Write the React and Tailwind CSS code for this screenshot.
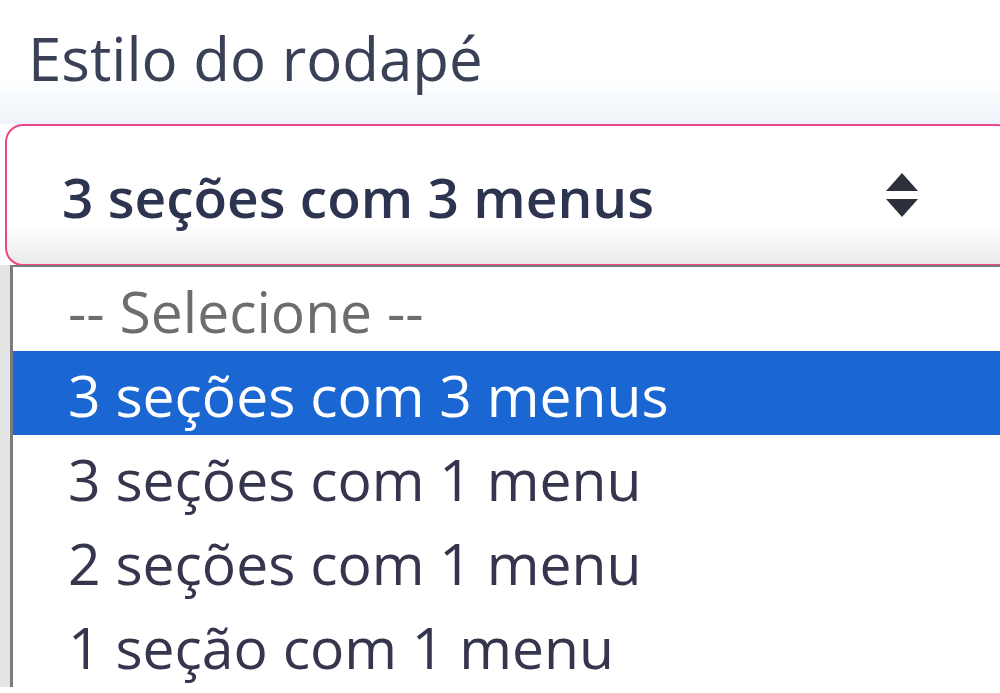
import React from 'react';

const options = [
  { label: '-- Selecione --', muted: true },
  { label: '3 seções com 3 menus', active: true },
  { label: '3 seções com 1 menu' },
  { label: '2 seções com 1 menu' },
  { label: '1 seção com 1 menu' },
];

function Arrows() {
  return (
    <svg width="36" height="48" viewBox="0 0 36 48">
      <path d="M18 2 L34 20 L2 20 Z" fill="#2b303b" />
      <path d="M2 28 L34 28 L18 46 Z" fill="#2b303b" />
    </svg>
  );
}

export default function App() {
  return (
    <div className="w-[1000px] h-[693px] overflow-hidden bg-white font-['Open_Sans',sans-serif]">
      <div className="bg-gradient-to-b from-white from-60% to-[#edf3f9] pl-[28px] pt-[18px] pb-[24px] h-[124px]">
        <span className="text-[60px] leading-[80px] text-[#3a4157]">Estilo do rodapé</span>
      </div>

      <div className="ml-[5px] w-[1010px] h-[142px] border-2 border-[#ea4689] rounded-[18px] bg-gradient-to-b from-white from-70% to-[#ebebeb] flex items-center pl-[55px] pr-[93px]">
        <span className="flex-1 text-[55px] font-semibold text-[#2c3450] pt-[4px]">3 seções com 3 menus</span>
        <Arrows />
      </div>

      <div className="flex -mt-[1px]">
        <div className="w-[10px] bg-[#e4e4e4]" />
        <div className="flex-1 border-l-[3px] border-t-2 border-[#7b7b7b] bg-white">
          {options.map((o) => (
            <div
              key={o.label}
              className={
                'h-[84px] flex items-center pl-[55px] pt-[6px] text-[57px] ' +
                (o.active
                  ? 'bg-[#1a66d2] text-white'
                  : o.muted
                  ? 'text-[#6d6c70]'
                  : 'text-[#35364d]')
              }
            >
              {o.label}
            </div>
          ))}
        </div>
      </div>
    </div>
  );
}
